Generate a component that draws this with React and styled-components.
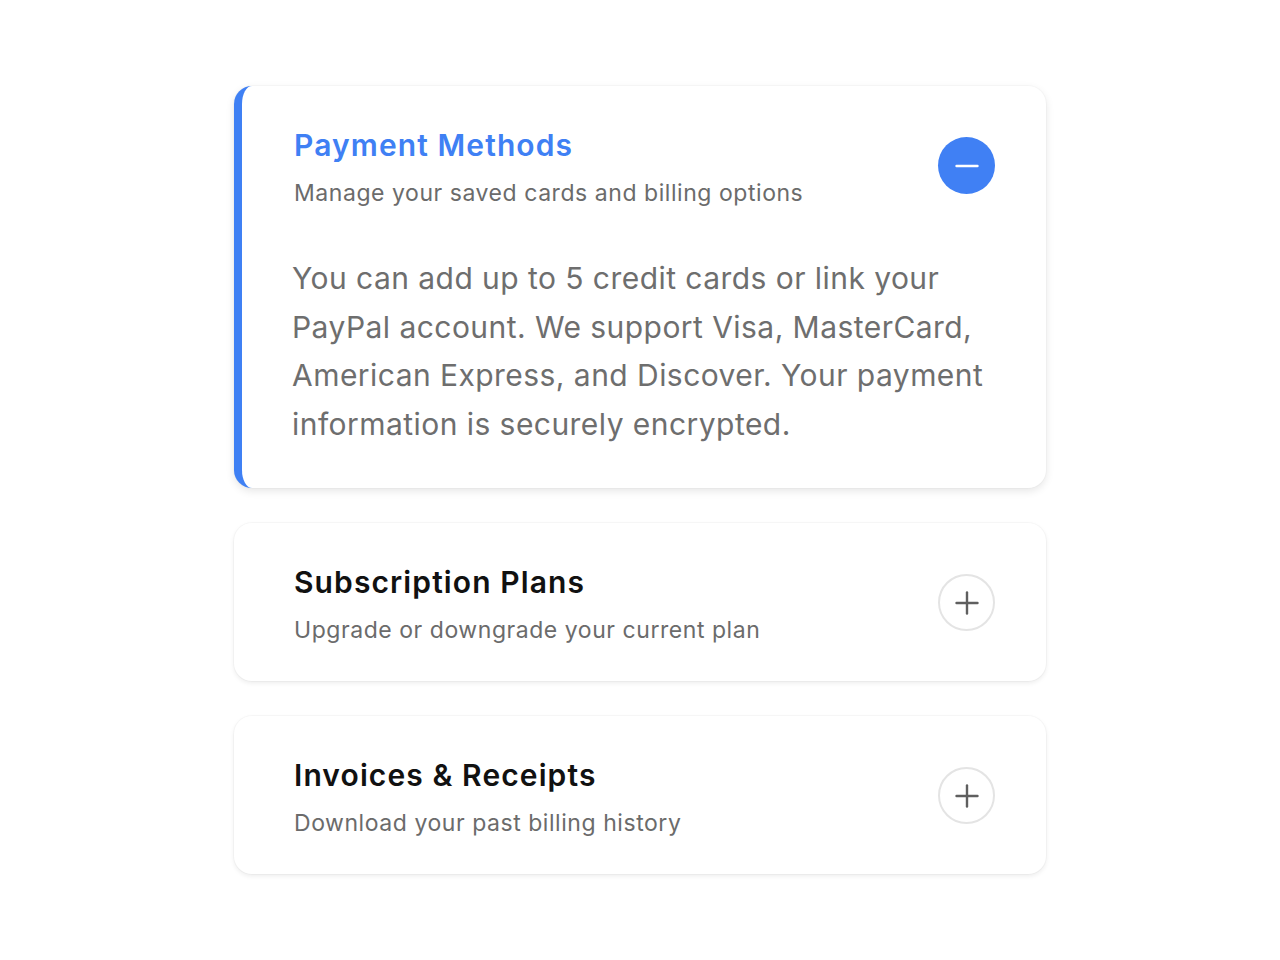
import React, { useState } from "react";
import styled, { createGlobalStyle } from "styled-components";

const Global = createGlobalStyle`
  * { box-sizing: border-box; }
  body {
    margin: 0;
    background: #ffffff;
    font-family: Inter, "Noto Sans", sans-serif;
    -webkit-font-smoothing: antialiased;
  }
`;

const Page = styled.div`
  width: 1280px;
  min-height: 960px;
  display: flex;
  justify-content: center;
  padding-top: 86px;
`;

const List = styled.div`
  width: 812px;
  display: flex;
  flex-direction: column;
  gap: 35px;
`;

const Card = styled.div`
  background: #ffffff;
  border-radius: 18px;
  border-left: 8px solid ${(p) => (p.$open ? "#3f80f4" : "transparent")};
  box-shadow: ${(p) =>
    p.$open
      ? "0 3px 8px rgba(0,0,0,0.10), 0 0 0 1px rgba(0,0,0,0.02)"
      : "0 2px 5px rgba(0,0,0,0.08), 0 0 0 1px rgba(0,0,0,0.025)"};
  padding: 38px 51px 37px 52px;
`;

const Header = styled.div`
  display: flex;
  align-items: center;
  justify-content: space-between;
  cursor: pointer;
`;

const Titles = styled.div`
  display: flex;
  flex-direction: column;
  gap: 13px;
`;

const Title = styled.h2`
  margin: 0;
  font-size: 30px;
  line-height: 42px;
  font-weight: 600;
  letter-spacing: 1.1px;
  color: ${(p) => (p.$open ? "#3f80f4" : "#111111")};
`;

const Subtitle = styled.p`
  margin: 0;
  font-size: 23px;
  line-height: 28px;
  letter-spacing: 0.55px;
  color: #6b6b6b;
`;

const Toggle = styled.button`
  width: 57px;
  height: 57px;
  flex: none;
  border-radius: 50%;
  border: ${(p) => (p.$open ? "none" : "2px solid #e4e4e4")};
  background: ${(p) => (p.$open ? "#4080f4" : "#ffffff")};
  color: ${(p) => (p.$open ? "#ffffff" : "#5f5f5f")};
  display: flex;
  align-items: center;
  justify-content: center;
  padding: 0;
  cursor: pointer;
`;

const Body = styled.p`
  margin: 47px 0 3px -2px;
  font-size: 30px;
  line-height: 48.5px;
  letter-spacing: 0.45px;
  color: #6e6e6e;
  max-width: 710px;
`;

const Icon = ({ open }) => (
  <svg width="24" height="24" viewBox="0 0 24 24" fill="none" stroke="currentColor" strokeWidth="2.4" strokeLinecap="round">
    <line x1="1.5" y1="12" x2="22.5" y2="12" />
    {!open && <line x1="12" y1="1.5" x2="12" y2="22.5" />}
  </svg>
);

const items = [
  {
    title: "Payment Methods",
    subtitle: "Manage your saved cards and billing options",
    body: "You can add up to 5 credit cards or link your PayPal account. We support Visa, MasterCard, American Express, and Discover. Your payment information is securely encrypted.",
  },
  {
    title: "Subscription Plans",
    subtitle: "Upgrade or downgrade your current plan",
    body: "Switch between Basic, Pro and Enterprise plans at any time. Changes take effect at the start of your next billing cycle.",
  },
  {
    title: "Invoices & Receipts",
    subtitle: "Download your past billing history",
    body: "All invoices are available as PDF downloads and are kept for up to seven years for your records.",
  },
];

export default function App() {
  const [open, setOpen] = useState(0);
  return (
    <>
      <Global />
      <Page>
        <List>
          {items.map((it, i) => {
            const isOpen = open === i;
            return (
              <Card key={it.title} $open={isOpen}>
                <Header onClick={() => setOpen(isOpen ? -1 : i)}>
                  <Titles>
                    <Title $open={isOpen}>{it.title}</Title>
                    <Subtitle>{it.subtitle}</Subtitle>
                  </Titles>
                  <Toggle $open={isOpen} aria-label={isOpen ? "Collapse" : "Expand"}>
                    <Icon open={isOpen} />
                  </Toggle>
                </Header>
                {isOpen && <Body>{it.body}</Body>}
              </Card>
            );
          })}
        </List>
      </Page>
    </>
  );
}
